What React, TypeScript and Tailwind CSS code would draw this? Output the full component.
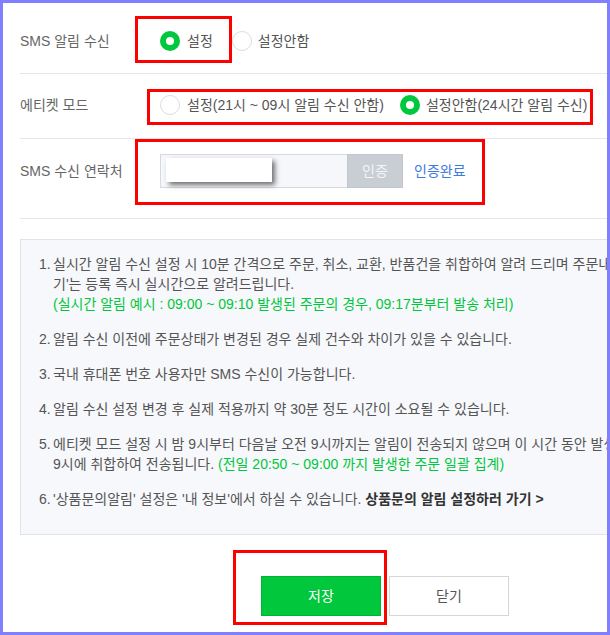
import React from "react";

const font = { fontFamily: '"Liberation Sans", "Noto Sans CJK KR", sans-serif' };

function Radio({ on }: { on: boolean }) {
  return on ? (
    <span className="w-[20px] h-[20px] rounded-full bg-[#00c73c] flex items-center justify-center shrink-0">
      <span className="block w-[8px] h-[8px] rounded-full bg-white" />
    </span>
  ) : (
    <span className="block w-[20px] h-[20px] rounded-full border border-[#dcdcdc] bg-white shrink-0" />
  );
}

function Item({ n, children, className = "" }: { n: string; children: React.ReactNode; className?: string }) {
  return (
    <div className={`flex ${className}`}>
      <span className="w-[14px] shrink-0">{n}</span>
      <div className="flex-1">{children}</div>
    </div>
  );
}

export default function App() {
  return (
    <div
      className="relative w-[610px] h-[635px] border-[3px] border-[#8080ff] bg-white overflow-hidden"
      style={font}
    >
      <div className="w-[730px] ml-[17px] text-[14px]">
        {/* Row 1 */}
        <div className="flex items-center h-[71px] pt-[6px] border-b border-[#e6e6e6]">
          <div className="w-[140px] text-[#666]">SMS 알림 수신</div>
          <div className="flex items-center text-[#555]">
            <Radio on />
            <span className="ml-[7px]">설정</span>
            <span className="ml-[19px] flex"><Radio on={false} /></span>
            <span className="ml-[6px]">설정안함</span>
          </div>
        </div>
        {/* Row 2 */}
        <div className="flex items-center h-[65px] pb-[2px] border-b border-[#e6e6e6]">
          <div className="w-[140px] text-[#666]">에티켓 모드</div>
          <div className="flex items-center text-[#555]">
            <Radio on={false} />
            <span className="ml-[7px]">설정(21시 ~ 09시 알림 수신 안함)</span>
            <span className="ml-[16px] flex"><Radio on /></span>
            <span className="ml-[6px]">설정안함(24시간 알림 수신)</span>
          </div>
        </div>
        {/* Row 3 */}
        <div className="flex items-start h-[80px] pt-[15px] border-b border-[#e6e6e6]">
          <div className="w-[140px] h-[34px] flex items-center text-[#666]">SMS 수신 연락처</div>
          <div className="flex items-center">
            <div className="w-[187px] h-[34px] border border-[#d6d9df] border-r-0 bg-[#f6f7fa] pl-[5px] pt-[3px]">
              <div className="w-[106px] h-[24px] bg-white shadow-[3px_3px_5px_rgba(0,0,0,0.55)]" />
            </div>
            <div className="w-[56px] h-[34px] bg-[#c9cdd4] border border-[#c2c6cd] text-[#f4f5f7] flex items-center justify-center">
              인증
            </div>
            <span className="ml-[11px] text-[#3d7be0]">인증완료</span>
          </div>
        </div>
        {/* Info box */}
        <div className="mt-[20px] border border-[#dfe3ea] bg-[#f7f8fb] pl-[18px] pt-[14px] pb-[25px] text-[#555] leading-[20px] whitespace-nowrap">
          <Item n="1.">
            <div>실시간 알림 수신 설정 시 10분 간격으로 주문, 취소, 교환, 반품건을 취합하여 알려 드리며 주문내역 변동 알림</div>
            <div>기'는 등록 즉시 실시간으로 알려드립니다.</div>
            <div className="text-[#00c73c]">(실시간 알림 예시 : 09:00 ~ 09:10 발생된 주문의 경우, 09:17분부터 발송 처리)</div>
          </Item>
          <Item n="2." className="mt-[15px]">
            알림 수신 이전에 주문상태가 변경된 경우 실제 건수와 차이가 있을 수 있습니다.
          </Item>
          <Item n="3." className="mt-[15px]">
            국내 휴대폰 번호 사용자만 SMS 수신이 가능합니다.
          </Item>
          <Item n="4." className="mt-[15px]">
            알림 수신 설정 변경 후 실제 적용까지 약 30분 정도 시간이 소요될 수 있습니다.
          </Item>
          <Item n="5." className="mt-[15px]">
            <div>에티켓 모드 설정 시 밤 9시부터 다음날 오전 9시까지는 알림이 전송되지 않으며 이 시간 동안 발생한 주문은 오전</div>
            <div>
              9시에 취합하여 전송됩니다. <span className="text-[#00c73c]">(전일 20:50 ~ 09:00 까지 발생한 주문 일괄 집계)</span>
            </div>
          </Item>
          <Item n="6." className="mt-[15px]">
            '상품문의알림' 설정은 '내 정보'에서 하실 수 있습니다.{" "}
            <span className="font-bold text-[#333]">상품문의 알림 설정하러 가기 &gt;</span>
          </Item>
        </div>
        {/* Buttons */}
        <div className="mt-[41px] flex justify-center gap-[8px]">
          <button className="w-[120px] h-[40px] bg-[#00c73c] border border-[#00b336] text-white text-[14px]">저장</button>
          <button className="w-[120px] h-[40px] bg-white border border-[#d6d6d6] text-[#555] text-[14px]">닫기</button>
        </div>
      </div>

      {/* annotation boxes */}
      <div className="absolute left-[132px] top-[13px] w-[97px] h-[47px] border-[3px] border-[#ff0000]" />
      <div className="absolute left-[144px] top-[86px] w-[446px] h-[36px] border-[3px] border-[#ff0000]" />
      <div className="absolute left-[132px] top-[136px] w-[350px] h-[66px] border-[3px] border-[#ff0000]" />
      <div className="absolute left-[230px] top-[547px] w-[154px] h-[75px] border-[3px] border-[#ff0000]" />
    </div>
  );
}
